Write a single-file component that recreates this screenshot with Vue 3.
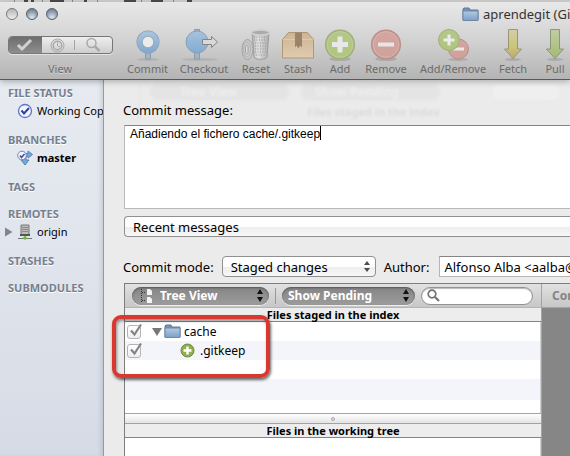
<script setup>
import { ref } from 'vue'

const message = ref('Añadiendo el fichero cache/.gitkeep')
const author = ref('Alfonso Alba <aalba@gmail.com>')
const view = ref('status')
const tools = [
  { id: 'commit', label: 'Commit' },
  { id: 'checkout', label: 'Checkout' },
  { id: 'reset', label: 'Reset' },
  { id: 'stash', label: 'Stash' },
  { id: 'add', label: 'Add' },
  { id: 'remove', label: 'Remove' },
  { id: 'addremove', label: 'Add/Remove' },
  { id: 'fetch', label: 'Fetch' },
  { id: 'pull', label: 'Pull' },
]
</script>

<template>
  <div class="window">
    <svg class="defs" width="0" height="0" aria-hidden="true">
      <defs>
        <linearGradient id="blue" x2="0" y2="1"><stop stop-color="#a6c3dc" /><stop offset="1" stop-color="#83abd2" /></linearGradient>
        <linearGradient id="green" x2="0" y2="1"><stop stop-color="#b5c78a" /><stop offset="1" stop-color="#b0c57d" /></linearGradient>
        <linearGradient id="red" x2="0" y2="1"><stop stop-color="#d3a6a1" /><stop offset="1" stop-color="#cfa19b" /></linearGradient>
        <linearGradient id="box" x2="0" y2="1"><stop stop-color="#cdb594" /><stop offset="1" stop-color="#e0cbb0" /></linearGradient>
        <linearGradient id="metal"><stop stop-color="#b2b2b2" /><stop offset=".35" stop-color="#e0e0e0" /><stop offset="1" stop-color="#acacac" /></linearGradient>
        <linearGradient id="yellow" x2="0" y2="1"><stop stop-color="#d3cfa6" /><stop offset=".6" stop-color="#cbc47a" /><stop offset="1" stop-color="#b9a96c" /></linearGradient>
        <linearGradient id="lime" x2="0" y2="1"><stop stop-color="#c2cca6" /><stop offset="1" stop-color="#a3bb74" /></linearGradient>
        <linearGradient id="folder" x2="0" y2="1"><stop stop-color="#b2cae4" /><stop offset="1" stop-color="#7d9fc6" /></linearGradient>
      </defs>
    </svg>

    <div class="backdrop" aria-hidden="true">
      <svg width="570" height="2" viewBox="0 0 570 2"><path d="M24 1h4M31 1h3M50 1h14M84 1h3M124 1h12M151 1h12M187 1h5" stroke="#4a4a4a" stroke-width="2" /><path d="M14.500 0v2M42.500 0v2M72.500 0v2M97.500 0v2M141.500 0v2M173.500 0v2" stroke="#888" /></svg>
    </div>
    <header class="chrome">
      <div class="titlebar">
        <div class="lights"><i class="light plain"></i><i class="light"></i><i class="light"></i></div>
        <h1 class="title">
          <svg width="17" height="15" viewBox="0 0 17 15"><path d="M1 13V2l1-1h5l1 2h8v10z" fill="#7792b3" stroke="#617895" /><path d="M1 4h15v9.500H1z" fill="url(#folder)" stroke="#6e88a7" /></svg>
          <span>aprendegit (Git)</span>
        </h1>
      </div>
      <nav class="tools" aria-label="Toolbar">
        <div class="view">
          <div class="segments">
            <button :class="{ on: view === 'status' }" aria-label="File status" @click="view = 'status'">
              <svg width="18" height="14" viewBox="0 0 18 14"><path d="M2 7l4 4L15 2" fill="none" stroke="#d2d2d2" stroke-width="3" /></svg>
            </button>
            <button :class="{ on: view === 'log' }" aria-label="History" @click="view = 'log'">
              <svg width="15" height="15" viewBox="0 0 15 15" fill="none" stroke="#a7a7a7"><circle cx="7.500" cy="7.500" r="6.500" /><circle cx="7.500" cy="7.500" r="4.300" stroke-width="1.500" /><path d="M7.500 4.500v3.300l2.500 1" /></svg>
            </button>
            <i class="notch"></i>
            <button :class="{ on: view === 'search' }" aria-label="Search" @click="view = 'search'">
              <svg width="16" height="16" viewBox="0 0 16 16" fill="none" stroke="#a9a9a9"><circle cx="6.500" cy="6" r="4.500" stroke-width="1.500" /><path d="M10 9.500l4.500 4.500" stroke-width="2.500" /></svg>
            </button>
          </div>
          <span>View</span>
        </div>

        <button v-for="t in tools" :key="t.id" class="tool">
          <svg v-if="t.id === 'commit'" width="34" height="32" viewBox="0 0 34 32">
            <ellipse cx="17" cy="30.500" rx="11" ry="1.500" fill="#999" opacity=".4" />
            <path d="M14.500 22h5v8h-5z" fill="#a2b5c5" stroke="#8a9cac" />
            <circle cx="17" cy="13" r="8.500" fill="none" stroke="#8ea0b6" stroke-width="6" />
            <circle cx="17" cy="13" r="8.500" fill="none" stroke="url(#blue)" stroke-width="4.500" />
            <circle cx="17" cy="13" r="5.700" fill="#ebebeb" stroke="#a3aeb9" />
          </svg>
          <svg v-else-if="t.id === 'checkout'" width="44" height="32" viewBox="0 0 44 32">
            <ellipse cx="18" cy="30.500" rx="18" ry="1.500" fill="#999" opacity=".4" />
            <path d="M12.500 .5h5v4h-5zM12.500 22h5v8h-5z" fill="#a2b5c5" stroke="#8a9cac" />
            <circle cx="15" cy="13" r="11" fill="url(#blue)" stroke="#8ea0b6" />
            <path d="M20.500 10.500h9V7.500l6 5.500-6 5.500v-3h-9z" fill="#d9d9d9" stroke="#858585" />
          </svg>
          <svg v-else-if="t.id === 'reset'" width="32" height="32" viewBox="0 0 32 32">
            <path d="M12 3l2 25c0 3 13 3 13 0l2-25z" fill="url(#metal)" stroke="#9c9c9c" />
            <path d="M14 8h12M14 11h12M15 14h11M15 17h11M15 20h11M15 23h11M16 26h9" stroke="#959595" stroke-dasharray="1 1.500" />
            <ellipse cx="20.500" cy="3.500" rx="8.800" ry="2.500" fill="#aaa" stroke="#d0d0d0" stroke-width="1.500" />
            <ellipse cx="7.500" cy="20.500" rx="5.500" ry="10" fill="#c9c9c9" stroke="#a1a1a1" />
            <ellipse cx="7" cy="20.500" rx="3.500" ry="7.500" fill="none" stroke="#b4b4b4" />
            <rect x="5.500" y="16.500" width="2.500" height="8" rx="1.200" fill="#ddd" stroke="#a3a3a3" />
          </svg>
          <svg v-else-if="t.id === 'stash'" width="34" height="32" viewBox="0 0 34 32">
            <path d="M1.500 10.500L7.500 3.500h19l6 7v18.500h-31z" fill="url(#box)" stroke="#b19674" stroke-linejoin="round" />
            <path d="M2 10.500h30" stroke="#decaae" />
            <path d="M14 3.500h7v15l-2-2-1.500 3-2-3-1.500 2z" fill="#9a836a" />
          </svg>
          <svg v-else-if="t.id === 'add'" width="32" height="32" viewBox="0 0 32 32">
            <ellipse cx="16" cy="30" rx="11" ry="2" fill="#888" opacity=".4" />
            <circle cx="16" cy="15.500" r="14.300" fill="url(#green)" stroke="#9fb178" stroke-width="1.500" />
            <circle cx="16" cy="15.500" r="12.800" fill="none" stroke="#c0cc9f" />
            <path d="M16 7.500v16M8 15.500h16" stroke="#e8e8e8" stroke-width="5" />
          </svg>
          <svg v-else-if="t.id === 'remove'" width="32" height="32" viewBox="0 0 32 32">
            <ellipse cx="16" cy="30" rx="11" ry="2" fill="#888" opacity=".4" />
            <circle cx="16" cy="15.500" r="14.300" fill="url(#red)" stroke="#bb8f8a" stroke-width="1.500" />
            <circle cx="16" cy="15.500" r="12.800" fill="none" stroke="#d9b4b0" />
            <path d="M8 15.500h16" stroke="#e9e5e5" stroke-width="4" />
          </svg>
          <svg v-else-if="t.id === 'addremove'" width="34" height="32" viewBox="0 0 34 32">
            <ellipse cx="22" cy="30.500" rx="10" ry="1.500" fill="#888" opacity=".4" />
            <circle cx="22.500" cy="20" r="10" fill="url(#red)" stroke="#bb8f8a" />
            <path d="M17 20h11" stroke="#ece7e7" stroke-width="3" />
            <circle cx="13" cy="11" r="10.500" fill="url(#green)" stroke="#9fb178" />
            <path d="M13 5.500v11M7.500 11h11" stroke="#ececec" stroke-width="3" />
          </svg>
          <svg v-else width="24" height="32" viewBox="0 0 24 32">
            <ellipse cx="12" cy="30.500" rx="8" ry="1.500" fill="#888" opacity=".4" />
            <path v-if="t.id === 'fetch'" d="M7.500 .5h9v19.500h4L12 29.500 3.500 20h4z" fill="url(#yellow)" stroke="#9a9573" />
            <path v-else d="M7.500 .5h9v19.500h4L12 29.500 3.500 20h4z" fill="url(#lime)" stroke="#8a9972" />
          </svg>
          <span>{{ t.label }}</span>
        </button>
      </nav>
    </header>

    <div class="body">
      <aside class="sidebar">
        <section>
          <h2>FILE STATUS</h2>
          <a href="#" class="entry">
            <svg width="16" height="16" viewBox="0 0 16 16"><circle cx="8" cy="8" r="6.500" fill="#f2f5ff" stroke="#6276c9" stroke-width="1.300" /><path d="M4.500 7.500L7 10.500 12 5" fill="none" stroke="#2c42a8" stroke-width="2" /></svg>
            <span>Working Copy</span>
          </a>
        </section>
        <section>
          <h2>BRANCHES</h2>
          <a href="#" class="entry strong">
            <svg width="16" height="16" viewBox="0 0 16 16"><path d="M8 3.500h3V1l4.500 3.500L11 8V6H9v4h3l-4 5-4-5h2.500V5z" fill="#79a8d8" stroke="#5683b7" /><circle cx="5" cy="5.500" r="4.300" fill="#f2f5ff" stroke="#7383b5" /><path d="M3 5.500l1.500 2L7.500 4" fill="none" stroke="#3d519f" stroke-width="1.500" /></svg>
            <span>master</span>
          </a>
        </section>
        <section><h2>TAGS</h2></section>
        <section>
          <h2>REMOTES</h2>
          <a href="#" class="entry nested">
            <svg width="8" height="10" viewBox="0 0 8 10"><path d="M0 .5L7.500 5 0 9.500z" fill="#7c8692" /></svg>
            <svg width="16" height="16" viewBox="0 0 16 16"><path d="M4 1h8v10H4z" fill="#bcbcbc" stroke="#777" /><path d="M5 3.500h6M5 5.500h6M5 7.500h6" stroke="#8a8a8a" /><path d="M3 10h10v2H3z" fill="#555" /><path d="M1 14.500h14M8 12v2" stroke="#767676" /><circle cx="8" cy="14" r="1.800" fill="#64bf35" /></svg>
            <span>origin</span>
          </a>
        </section>
        <section><h2>STASHES</h2></section>
        <section><h2>SUBMODULES</h2></section>
      </aside>

      <main class="sheet">
        <div class="behind" aria-hidden="true">
          <div class="behind-bar"><span>Tree View</span><span>Show Pending</span><i></i></div>
          <b>Files staged in the index</b>
        </div>

        <label class="caption" for="message">Commit message:</label>
        <div class="editor">
          <textarea id="message" v-model="message" spellcheck="false"></textarea>
          <i class="caret"></i>
        </div>

        <select class="pop recent" aria-label="Recent messages"><option>Recent messages</option></select>

        <div class="options">
          <label for="mode">Commit mode:</label>
          <span class="picker">
            <select id="mode" class="pop"><option>Staged changes</option></select>
            <svg width="6" height="11" viewBox="0 0 6 11"><path d="M3 0l3 4H0zM3 11L0 7h6z" fill="#4c4c4c" /></svg>
          </span>
          <label for="author">Author:</label>
          <input id="author" v-model="author" class="author" type="text" spellcheck="false" />
        </div>

        <div class="panes">
          <div class="files">
            <div class="filter">
              <span class="picker dark tree">
                <svg class="glyph" width="14" height="16" viewBox="0 0 14 16"><path d="M1.500 1v13M2 4.500h4M2 12.500h4" stroke="#333" stroke-dasharray="1 1" fill="none" /><path d="M7 1h3l2 2v4H7zM7 9h3l2 2v4H7z" fill="#f3f3f3" /></svg>
                <select aria-label="File view"><option>Tree View</option></select>
                <svg width="6" height="13" viewBox="0 0 6 13"><path d="M3 0l3 5H0zM3 13L0 8h6z" fill="#111" /></svg>
              </span>
              <i class="rule"></i>
              <span class="picker dark show">
                <select aria-label="Filter"><option>Show Pending</option></select>
                <svg width="6" height="13" viewBox="0 0 6 13"><path d="M3 0l3 5H0zM3 13L0 8h6z" fill="#111" /></svg>
              </span>
              <span class="search">
                <svg width="13" height="13" viewBox="0 0 13 13" fill="none" stroke="#747474"><circle cx="5" cy="5" r="3.800" stroke-width="1.700" /><path d="M8 8l4 4" stroke-width="2.200" /></svg>
                <input type="search" aria-label="Search files" />
              </span>
            </div>
            <h3>Files staged in the index</h3>
            <div class="staged">
              <div class="row">
                <span class="tick"><input type="checkbox" checked aria-label="cache" /><svg width="16" height="17" viewBox="0 0 16 17"><path d="M4 7.500l3.500 4L14 1.500" fill="none" stroke="#838383" stroke-width="2.200" /></svg></span>
                <svg class="arrow" width="10" height="8" viewBox="0 0 10 8"><path d="M0 0h10L5 8z" fill="#777" /></svg>
                <svg width="17" height="15" viewBox="0 0 17 15"><path d="M1 13V2l1-1h5l1 2h8v10z" fill="#7792b3" stroke="#617895" /><path d="M1 4h15v9.500H1z" fill="url(#folder)" stroke="#6e88a7" /></svg>
                <span>cache</span>
              </div>
              <div class="row child">
                <span class="tick"><input type="checkbox" checked aria-label=".gitkeep" /><svg width="16" height="17" viewBox="0 0 16 17"><path d="M4 7.500l3.500 4L14 1.500" fill="none" stroke="#838383" stroke-width="2.200" /></svg></span>
                <svg class="plus" width="15" height="15" viewBox="0 0 15 15"><circle cx="7.500" cy="7.500" r="6.500" fill="#91ad50" stroke="#718b3b" /><path d="M7.500 3.500v8M3.500 7.500h8" stroke="#fff" stroke-width="2.400" /></svg>
                <span>.gitkeep</span>
              </div>
              <div class="row"></div>
              <div class="row"></div>
              <div class="mark"></div>
            </div>
            <div class="splitter"><i></i></div>
            <h3>Files in the working tree</h3>
            <div class="working"></div>
          </div>
          <div class="preview"><div class="preview-head">Commit</div></div>
        </div>
      </main>
    </div>
  </div>
</template>

<style>
body { background: #e9e9e9; overflow: hidden; }
</style>

<style scoped>
* { box-sizing: border-box; }
h1, h2, h3 { margin: 0; font-weight: inherit; }
button, input, select, textarea { font: inherit; color: inherit; margin: 0; appearance: none; outline: none; }
button { border: 0; padding: 0; background: none; }
svg { display: block; flex: none; }
.defs { position: absolute; }
.window { height: 100vh; display: flex; flex-direction: column; overflow: hidden; font: 12px/16px "Noto Sans", "Open Sans", sans-serif; color: #000; }

.backdrop { flex: none; height: 2px; overflow: hidden; background: #cfcfcf; }
.chrome { flex: none; height: 78px; position: relative; z-index: 2; background: linear-gradient(#e8e8e8, #d2d2d2 50%, #b4b4b4); border-bottom: 1px solid #585858; box-shadow: 0 2px 6px rgba(0, 0, 0, .25); }
.titlebar { display: flex; align-items: center; justify-content: space-between; height: 24px; padding: 0 0 0 6px; }
.lights { display: flex; gap: 8px; }
.light { width: 12px; height: 12px; border-radius: 50%; border: 1px solid #57616d; background: radial-gradient(circle at 50% 85%, #dce6f1, #8796a7 65%, #66727f); }
.light.plain { border-color: #777; background: linear-gradient(#b5b5b5, #eee); }
.title { flex: none; width: 108px; display: flex; gap: 4px; align-items: center; white-space: nowrap; font-size: 13px; line-height: 18px; color: #333; }
.tools { display: grid; grid-template-columns: 123px 49px 64px 40px 44px 40px 52px 82px 38px 46px; align-items: end; height: 50px; padding-top: 3px; font-size: 11px; line-height: 15px; color: #6b6b6b; text-shadow: 0 1px 0 rgba(255, 255, 255, .45); }
.tool, .view { display: flex; flex-direction: column; align-items: center; }
.tool { white-space: nowrap; }
.view { padding-right: 3px; gap: 7px; }
.segments { display: grid; grid-template-columns: 33px 32px 1px 1fr; width: 105px; height: 18px; border: 1px solid #777; border-radius: 4px; background: linear-gradient(#eee, #cecece); overflow: hidden; box-shadow: 0 1px 0 rgba(255, 255, 255, .5); }
.segments button { display: grid; place-items: center; }
.notch { margin: 3px 0; background: #a5a5a5; }
.segments .on { background: linear-gradient(#6e6e6e, #8d8d8d); }

.body { flex: 1; min-height: 0; display: flex; }
.sidebar { flex: none; width: 104px; overflow: hidden; background: linear-gradient(#e7ebf1, #dde1ea 65%, #d5dbe5); border-right: 1px solid #929ba5; padding: 5px 0 0 8px; display: flex; flex-direction: column; gap: 11px; font-size: 11px; line-height: 16px; white-space: nowrap; box-shadow: inset -4px 0 4px -2px rgba(80, 90, 110, .18); }
.sidebar h2 { font-size: 11px; font-weight: 700; color: #75808e; text-shadow: 0 1px 0 #fff; }
.entry { display: flex; align-items: center; gap: 4px; padding-left: 9px; height: 20px; color: #000; text-decoration: none; }
.entry.nested { padding-left: 0; margin-left: -3px; }
.strong { font-weight: 700; }

.sheet { flex: 1; min-width: 0; position: relative; display: flex; flex-direction: column; background: #ebebeb; padding: 21px 0 0 20px; font-size: 13px; line-height: 18px; }
.sheet label { flex: none; }
.caption { position: relative; height: 24px; margin-left: -1px; }
.behind { position: absolute; left: 35px; right: 0; top: 4px; filter: blur(1px); border-left: 1px solid #e4e4e4; color: #dbdcdc; }
.behind-bar { display: flex; gap: 12px; padding: 0 10px; font-size: 12px; font-weight: 700; line-height: 16px; color: #ededed; }
.behind-bar span { width: 139px; border-radius: 8px; background: #e4e4e4; padding-left: 30px; }
.behind-bar span + span { padding-left: 14px; }
.behind-bar i { flex: 1; margin-left: 40px; border-radius: 8px; background: #efefef; }
.behind b { display: block; padding: 4px 0 0 167px; font-size: 11px; line-height: 16px; }
.editor { position: relative; flex: none; height: 84px; }
.editor textarea { display: block; width: 100%; height: 100%; resize: none; border: 1px solid #b9b9b9; border-top-color: #858585; border-right: 0; background: #fff; padding: 1px 5px; font: 12px/14px "Liberation Sans", Arial, sans-serif; }
.caret { position: absolute; left: 196px; top: 1px; width: 1px; height: 14px; background: #000; }
.pop { height: 21px; border: 1px solid #909090; border-radius: 4px; background: linear-gradient(#fff, #fdfdfd 50%, #eeeeee 55%, #f7f7f7); padding: 0 8px; }
.recent { flex: none; width: 100%; margin-top: 7px; border-right: 0; border-radius: 4px 0 0 4px; }
.options { flex: none; display: flex; align-items: center; margin: 19px 0 6px -1px; height: 21px; }
.picker { position: relative; display: flex; align-items: center; }
.picker > svg:last-child { position: absolute; right: 6px; pointer-events: none; }
.options .picker { flex: none; width: 154px; margin: 0 8px; }
.options .pop { width: 100%; }
.author { flex: 1; min-width: 0; height: 21px; margin-left: 10px; border: 1px solid #b5b5b5; border-top-color: #858585; border-right: 0; border-radius: 0; background: #fff; padding: 0 0 0 4px; }

.panes { flex: 1; min-height: 0; display: flex; border: 1px solid #7d7d7d; border-width: 1px 0 0 1px; font-size: 12px; line-height: 16px; }
.files { flex: 1; min-width: 0; display: flex; flex-direction: column; border-right: 1px solid #a4a4a4; background: #fff; }
.filter { flex: none; display: flex; align-items: center; height: 24px; padding: 0 8px 0 7px; background: linear-gradient(#e1e1e1, #c7c7c7); border-bottom: 1px solid #b5b5b5; }
.dark { height: 18px; border-radius: 9px; background: linear-gradient(#858585, #9c9c9c); box-shadow: inset 0 1px 2px #555, 0 1px 0 #eee; color: #fff; font-weight: 700; text-shadow: 0 -1px 0 #666; }
.dark select { flex: 1; border: 0; background: none; padding: 0 0 0 6px; height: 18px; line-height: 18px; }
.tree { width: 137px; padding-left: 8px; }
.show { width: 133px; }
.rule { width: 1px; height: 16px; margin: 0 6px; background: #999; }
.search { flex: 1; min-width: 0; margin-left: 6px; height: 18px; display: flex; align-items: center; gap: 4px; border: 1px solid #939393; border-radius: 9px; background: #fff; padding: 0 5px; box-shadow: inset 0 1px 1px #bbb; }
.search input { flex: 1; min-width: 0; border: 0; background: none; padding: 0; }
.files h3 { flex: none; height: 14px; background: #ededed; border-bottom: 1px solid #838383; text-align: center; font-size: 11px; font-weight: 700; line-height: 13px; }
.staged { flex: none; position: relative; height: 91px; border-right: 1px solid #d0d0d0; }
.row { display: flex; align-items: center; height: 19px; padding-left: 2px; }
.row:nth-child(even) { background: #f3f5fa; }
.row:nth-child(4) { height: 21px; }
.tick { display: grid; width: 16px; margin-right: 9px; }
.tick > * { grid-area: 1 / 1; }
.tick input { width: 14px; height: 14px; align-self: end; margin-bottom: 1px; border: 1px solid #b4b4b4; border-radius: 3px; background: linear-gradient(#fff, #eee); }
.tick svg { pointer-events: none; }
.row > .arrow { margin-right: 2px; }
.row > span:last-child { margin-left: 3px; }
.row > .plus { margin: 0 2px 0 28px; }
.mark { position: absolute; left: -13px; top: -7px; width: 158px; height: 63px; border: 4px solid #d93830; border-radius: 9px; box-shadow: 1px 2px 3px rgba(0, 0, 0, .6), inset 1px 2px 3px rgba(0, 0, 0, .4); pointer-events: none; }
.splitter { flex: none; height: 11px; display: grid; place-items: center; border: 1px solid #a3a3a3; border-width: 1px 0; background: linear-gradient(#fff, #e4e4e4); }
.splitter i { width: 4px; height: 4px; border: 1px solid #aaa; border-radius: 50%; background: #ddd; }
.working { flex: 1; border-right: 1px solid #d0d0d0; }
.preview { flex: none; width: 28px; overflow: hidden; background: #868686; }
.preview-head { height: 24px; padding-left: 10px; background: linear-gradient(#e1e1e1, #c7c7c7); border-bottom: 1px solid #a5a5a5; color: #858585; font-weight: 700; line-height: 23px; }
</style>
